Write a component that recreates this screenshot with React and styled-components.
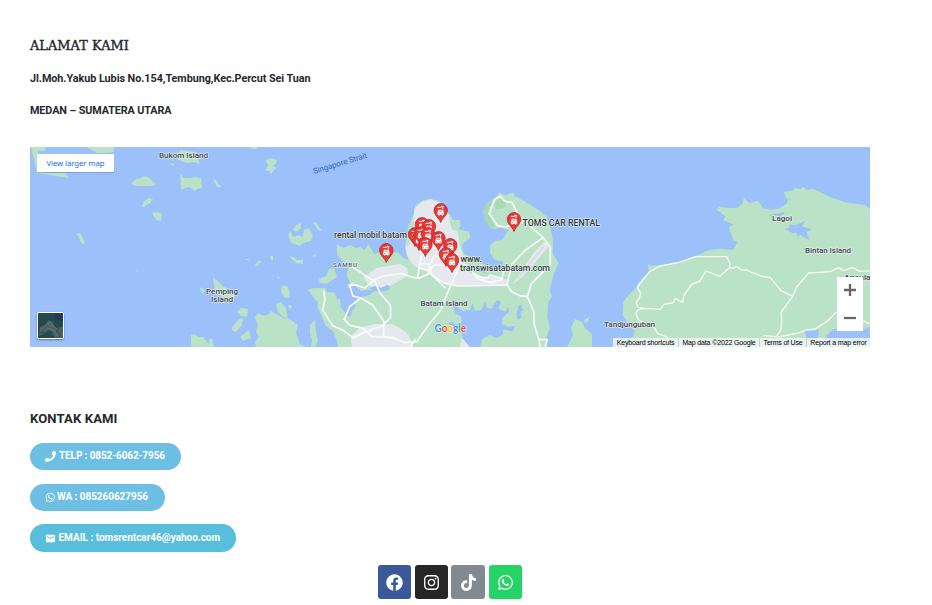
import React from "react";
import styled, { createGlobalStyle } from "styled-components";
import { FaPhone, FaWhatsapp, FaFacebook, FaInstagram, FaTiktok } from "react-icons/fa";
import { MdEmail } from "react-icons/md";

const GlobalStyle = createGlobalStyle`
  * { box-sizing: border-box; }
  body { margin: 0; background: #fff; font-family: Roboto, sans-serif; color: #25282c; overflow: hidden; }
`;

const Page = styled.main`
  width: 932px;
  height: 605px;
  padding: 37px 62px 0 30px;
  display: flex;
  flex-direction: column;
  align-items: flex-start;
`;

const SlabHeading = styled.h2`
  margin: 0;
  font: 500 12.9px/18px "DejaVu Serif", serif;
  letter-spacing: 0.05px;
  -webkit-text-stroke: 0.4px #25282c;
  white-space: nowrap;
`;

const AddressLine = styled.p`
  margin: 16px 0 0;
  font-size: 10.8px;
  line-height: 16px;
  font-weight: 700;
  letter-spacing: ${(p) => p.$spacing || 0}px;
  white-space: nowrap;
`;

const MapFrame = styled.section`
  position: relative;
  width: 840px;
  height: 200px;
  margin-top: 28px;
  flex: none;
  overflow: hidden;
  background: #9cc0f9;
`;

const MapCanvas = styled.svg`
  display: block;
  width: 840px;
  height: 200px;
`;

const LargerMap = styled.a`
  position: absolute;
  left: 7px;
  top: 7px;
  width: 77px;
  height: 18px;
  border-radius: 1px;
  background: #fff;
  box-shadow: 0 1px 1px rgba(0, 0, 0, 0.18);
  color: #1a6fe0;
  font: 400 7.8px/18px "Noto Sans", sans-serif;
  letter-spacing: -0.1px;
  text-align: center;
  white-space: nowrap;
`;

const Satellite = styled.div`
  position: absolute;
  left: 7px;
  top: 165px;
  width: 27px;
  height: 27px;
  border: 1px solid #fff;
  border-radius: 2px;
  overflow: hidden;
  box-shadow: 0 1px 2px rgba(0, 0, 0, 0.4);
  svg { display: block; }
`;

const ZoomPanel = styled.div`
  position: absolute;
  right: 7px;
  top: 130px;
  width: 26px;
  height: 54px;
  display: grid;
  grid-template-rows: 25px 29px;
  place-items: center;
  background: #fff;
`;

const Attribution = styled.div`
  position: absolute;
  right: 0;
  bottom: 0;
  height: 9px;
  width: 257px;
  display: flex;
  background: rgba(241, 244, 245, 0.85);
  font: 400 7px/10px "Liberation Sans", sans-serif;
  color: #000;
  white-space: nowrap;
`;

const Credit = styled.span`
  width: ${(p) => p.$width}px;
  text-align: center;
  letter-spacing: ${(p) => p.$spacing}px;
  & + & { border-left: 1px solid #ccd3d8; }
`;

const ContactHeading = styled.h2`
  margin: 63px 0 0;
  font-size: 13.1px;
  line-height: 18px;
  font-weight: 700;
  letter-spacing: 0.1px;
`;

const ContactList = styled.div`
  display: flex;
  flex-direction: column;
  align-items: flex-start;
  padding-top: 15px;
`;

const ContactButton = styled.a`
  display: flex;
  align-items: center;
  width: ${(p) => p.$width}px;
  height: ${(p) => p.$height || 27}px;
  margin-bottom: ${(p) => p.$gap}px;
  padding: 0 0 2px 15px;
  gap: ${(p) => p.$iconGap}px;
  border-radius: 14px;
  background: ${(p) => p.$color};
  color: #fff;
  font-size: 10px;
  font-weight: 700;
  letter-spacing: ${(p) => p.$spacing}px;
  white-space: nowrap;
  svg { flex: none; position: relative; top: 1px; }
`;

const SocialRow = styled.nav`
  display: grid;
  grid-template-columns: 33px 33px 34px 33px;
  column-gap: 3.6px;
  margin: 13px 0 0 348px;
`;

const SocialLink = styled.a`
  height: 34px;
  display: grid;
  place-items: center;
  border-radius: 3px;
  color: #fff;
  background: ${(p) => p.$color};
`;

const isletShapes = [
  "M31 147H45V151H38V169L45 173L65 173L69 178L55 176L37 173Z",
  "M87 147H114V152L106 153H97L92 150Z",
  "M174 155L182 150L196 152L200 164L194 162L186 163L177 159Z M170 163l4 1-1 2Z",
  "M131 184L136 179L141 178L144 176L148 177L156 184L153 186H136Z",
  "M180 175L182 174L183 178L190 178L194 177L201 178L202 188L197 189L194 191L190 187L185 188L181 190Z",
  "M213 179L216 180L221 187H217Z",
  "M142 207L143 202L149 198L153 199L150 203L144 207Z",
  "M152 213L157 212L162 214L161 221L156 220Z",
  "M76 234L80 233L84 240V245L81 243L79 237Z",
  "M136 270l2 0 1 2-2-1Z M246 259h3v1h-3Z",
  "M213 277L224 287L235 293L234 299L228 301L215 292Z M200 287l3 2 2 2-3 3Z",
  "M191 347V335L194 334L199 337L203 337L207 342L212 347Z M209 347V340L212 338L214 347Z",
  "M250 147h8l-2 2h-4Z",
  "M265 170L268 166L266 160L271 158L277 160L276 164L273 166L276 168L271 174L269 171Z",
  "M288 234L291 231L293 237L299 235L303 237L304 230L309 228L313 236L311 241L303 243L300 246L291 243Z",
  "M293 230L296 225L301 223L301 228L296 232Z M313 223L316 222L322 231L318 230Z",
  "M289 256L294 257L297 260L303 260V264L296 263Z M255 265L259 260L261 262L257 267Z",
  "M270 256h3v4h-2Z M312 256l4-2-1 3Z M277 276l3 2-2 1Z",
  "M281 289L283 285L287 286L290 291L289 297L285 298L282 294Z",
  "M276 304L281 302L286 308L288 319L283 317L278 312Z",
  "M255 317L258 313L264 316L269 314L271 311L276 314L280 316L284 318L291 320L298 325L296 333L299 341L298 347H256L255 342L259 337L256 332L258 326Z",
  "M310 325L315 320L316 332L318 341L315 347H311L312 340L310 333Z",
  "M237 312L241 308L248 309L247 317L241 316Z M232 327L239 319L243 318L242 325L236 332L232 330Z M240 337L249 330L251 338L243 341Z",
  "M288 305l3 0 1 3-3 1Z M292 336L297 338L300 344L307 347H292Z",
  "M319 279L326 276L329 269L334 268L335 272L337 277L332 280L327 284L320 283Z",
  "M567 347L573 335L571 328L575 319L582 322L585 328L592 334V347Z M584 320L590 316L588 322L585 323Z",
  "M717 209l2-3 2 2-2 3Z",
];

const batamLand = [
  "M24 315L36 310L75 308L80 320L105 323L112 345L119 340L125 370L142 385L146 397L155 390L150 355L157 333L142 305L150 295L140 270L145 250L132 232L112 210L110 178L130 188L150 180L170 190L180 184L193 196L205 177L223 207L240 200L250 214L263 215L278 205L292 200L310 218L325 225L315 182L326 120L340 90L347 60L370 46L391 41L418 48L440 82L453 91L457 104L480 105L482 124L475 132L508 140L510 160L485 180L491 205L525 222L555 240L572 240L578 253L606 250L610 232L584 224L570 205L571 180L587 167L607 165L625 135L602 128L580 132L557 111L551 80L558 57L585 38L596 23L617 31L630 25L640 23L645 33L690 58L720 79L740 95L753 135L759 168L758 205L776 235L762 265L749 315L756 335L745 350L742 395L750 427L740 455V486H115L110 465L100 440L76 420L68 400L53 368L53 350L45 343Z",
];

const batamWater = [
  "M146 307L165 300L182 318L208 314L224 317L207 331L181 337L166 347L165 367L142 392L120 362L139 345Z",
  "M207 310L225 302L244 308L260 300L270 303L265 315L240 320L220 317Z",
  "M459 345L472 348L475 370L490 378L510 375L518 354L525 378L545 374L555 350L560 368L575 371L590 346L603 350L595 371L617 380L623 365L628 380L606 398L607 418L622 425L646 422L638 440L610 433L608 449L590 460L570 450L548 461L541 486H509L487 459L485 442L458 432L445 415L458 410L467 420L486 410L482 392L467 387L459 365Z",
  "M654 365L663 357L669 374L661 382L665 397L654 405L650 389Z",
  "M508 240L525 245L550 255L560 265L540 260Z",
];

const batamUrban = [
  "M316 185L328 178L324 140L342 128L340 100L344 70L370 48L392 43L422 54L446 88L450 112L457 134L473 138L478 175L488 207L498 245L512 264L550 276L604 276L624 287L624 302L470 305L420 290L386 262L342 244L320 210Z",
  "M190 277L230 249L300 236L322 250L324 272L250 315L225 315L205 299Z",
  "M142 299L157 294L173 302L159 314Z M155 486L153 452L181 427L225 417L279 418L305 432L326 451L340 486Z",
  "M638 298L700 205L733 170L748 182L718 218L667 276Z",
  "M480 486L485 460L505 475L512 486Z",
];

const batamRoads = [
  "M71 318L75 345L67 374L98 422L128 435L158 458L205 437L247 422L272 397L271 360L240 324L225 290L195 271L160 247",
  "M158 458L168 455L190 442L215 438",
  "M133 403L149 365L182 339L218 360L252 410L250 455L284 458",
  "M182 339L159 333L149 302L166 300L195 309L222 285L250 273L305 265L327 274L357 280L385 267L395 250",
  "M133 403L150 421L190 430L215 454L282 459L315 473L350 470L390 414L423 375L434 344L475 248",
  "M345 465L330 486",
  "M353 277L358 242L366 207M357 236L390 237L403 212L428 220M386 238L396 270L435 295L475 303L620 300",
  "M358 249L383 255L402 240L460 245L500 240L532 280L570 292L604 285L612 255L585 254",
  "M523 266L545 278H565L570 270L600 279",
  "M592 122L567 85L584 44L600 33L615 49L636 52L655 90L698 130L730 158L678 194L636 237L621 299L635 320L660 332L682 335L701 379L703 420L717 464H742L735 486M717 464L720 486",
  "M592 122L617 126L644 118L666 112M730 158L751 187V238L695 295L682 334",
  "M386 260L435 308",
];

const bintanLand = "M82 486L98 456L104 440L68 391L70 350L86 330L112 306L116 292L147 261L142 234L151 242L190 240L235 232L280 215L330 194L365 191L399 195L413 171L401 167L386 126L403 119L370 106L376 94L348 73L358 67L387 69L414 68L427 55L432 38L448 54L474 47L490 70L512 74L535 71L560 56L563 46L550 20L575 18L586 8L600 13L609 5L623 15L639 11L659 21L693 37L735 52L772 57L795 60L810 72V486Z";

const bintanRoads = [
  "M166 486L204 458L173 445L160 424L116 406L108 386L113 374L134 370L180 373L192 358L218 354L226 341L249 352L251 333L276 297L298 290L318 258L360 274L388 248L390 235L380 215L287 215L237 232L180 243L148 261L112 306L122 325L118 339L108 353L115 367L134 370",
  "M388 248L400 250L410 244L423 254L439 255L486 274L511 278L543 317L578 334L544 381L545 406L543 434L529 455L490 452",
  "M578 334L590 306L626 264L691 260L715 248L731 257L757 247L780 259L810 257",
  "M530 457L595 444L618 435L646 432L680 410L710 381L750 390L810 417",
];

const bintanWater = [
  "M553 132L569 127L568 119L590 119L614 108L606 124L617 128L633 131L630 137L619 140L627 163L612 159L602 149L592 152L588 143L577 144L565 138Z",
  "M505 91L523 87L552 81L552 86L538 94L523 91Z M564 39l5 3-3 5Z M615 438L657 435L653 460H620Z M680 450L701 433H790L810 425V475H675Z",
];

const pins = [
  [386.3, 262], [440.7, 222], [514, 231], [422, 236], [429, 238], [415, 246], [419, 250],
  [421, 245], [428, 246], [425.4, 256], [438.5, 250], [450.3, 257], [446, 266], [452, 272],
];

const labels = [
  ["Bukom Island", 159, 158, 49],
  ["Pemping", 206, 293.5, 32],
  ["Island", 211, 302, 22],
  ["Batam Island", 420.5, 305.5, 47],
  ["Tandjunguban", 604, 326.5, 51],
  ["Lagoi", 772, 220.7, 20],
  ["Bintan Island", 805, 252.7, 46],
  ["Anculai", 844, 279.5, 29],
];

const places = [
  ["rental mobil batam", 334, 238.3, 73],
  ["TOMS CAR RENTAL", 522.5, 225.7, 77.5],
  ["www.", 460.5, 261.7, 21.5],
  ["transwisatabatam.com", 460, 271, 90],
];

function MapPin({ x, y }) {
  return (
    <g transform={`translate(${x} ${y})`}>
      <path d="M0 .5C-1.3-4-6.7-6.5-6.7-11.7a6.7 6.7 0 0 1 13.4 0C6.7-6.5 1.3-4 0 .5Z" fill="#e63b35" stroke="#bd222b" strokeWidth=".8" />
      <path d="M-3.2-14.6h3.7M.3-15.6h2.6M2-15.5v2.6" stroke="#fff" fill="none" strokeWidth="1" />
      <path d="M-3.2-9.3l.9-3h4.6l.9 3v2h-1v.9H.9v-.9H-.9v.9h-1.3v-.9h-1Z" fill="#fff" />
      <path d="M-1.5-10.8h3M-2.2-8.5h1M1.2-8.5h1" stroke="#e33b35" strokeWidth=".7" />
    </g>
  );
}

function BatamMap() {
  return (
    <MapCanvas viewBox="30 147 840 200" aria-label="Batam map">
      <rect x="30" y="147" width="840" height="200" fill="#9cc0f9" />
      <g fill="#b9e2c6">{isletShapes.map((d) => <path key={d} d={d} />)}</g>
      <g transform="translate(300 185) scale(.333333)">
        <g fill="#b9e2c6">{batamLand.map((d) => <path key={d} d={d} />)}</g>
        <path d="M557 57L585 38L596 28L604 34L584 45L568 84L591 122L575 132L556 110L550 80Z M604 34L620 55L609 70L590 72L580 55Z" fill="#a6d9b5" />
        <g fill="#e5e8ec">{batamUrban.map((d) => <path key={d} d={d} />)}</g>
        <g fill="#9cc0f9">{batamWater.map((d) => <path key={d} d={d} />)}</g>
        <path d="M652 282L732 184" stroke="#d6dde1" strokeWidth="5" />
        <g fill="none" stroke="#f9fbf8" strokeWidth="5" strokeLinejoin="round" strokeLinecap="round">
          {batamRoads.map((d) => <path key={d} d={d} />)}
        </g>
      </g>
      <g transform="translate(600 185) scale(.333333)">
        <path fill="#b9e2c6" d={bintanLand} />
        <g fill="#9cc0f9">{bintanWater.map((d) => <path key={d} d={d} />)}</g>
        <g fill="none" stroke="#f6faf2" strokeWidth="4" strokeLinejoin="round">
          {bintanRoads.map((d) => <path key={d} d={d} />)}
        </g>
      </g>
      <g fontFamily="Roboto, sans-serif" fontSize="8" fontWeight="500" fill="#3e4347" stroke="#e9f2f5" strokeWidth="1.2" strokeLinejoin="round" paintOrder="stroke">
        {labels.map(([text, x, y, width]) => <text key={text} x={x} y={y} textLength={width} lengthAdjust="spacingAndGlyphs">{text}</text>)}
      </g>
      <text x="333" y="266.5" fontFamily="Roboto, sans-serif" fontSize="6.2" fontWeight="500" textLength="24" fill="#536068" stroke="#e9f3f5" strokeWidth="1" paintOrder="stroke">SAMBU</text>
      <text x="314" y="174" transform="rotate(-17 314 174)" fontFamily="Roboto, sans-serif" fontSize="8" textLength="56" fill="#3567bd">Singapore Strait</text>
      {pins.map(([x, y]) => <MapPin key={`${x}-${y}`} x={x} y={y} />)}
      <g fontFamily="Roboto, sans-serif" fontSize="8.7" fontWeight="500" fill="#303438" stroke="#eef5f5" strokeWidth="1" strokeLinejoin="round" paintOrder="stroke">
        {places.map(([text, x, y, width]) => <text key={text} x={x} y={y} textLength={width} lengthAdjust="spacingAndGlyphs">{text}</text>)}
      </g>
      <text x="434.5" y="332" fontFamily="Lato, sans-serif" fontSize="10.8" fontWeight="700" textLength="31.5" lengthAdjust="spacingAndGlyphs" stroke="#fff" strokeWidth="1" paintOrder="stroke">
        <tspan fill="#4285f4">G</tspan><tspan fill="#ea4335">o</tspan><tspan fill="#fbbc04">o</tspan><tspan fill="#4285f4">g</tspan><tspan fill="#34a853">l</tspan><tspan fill="#ea4335">e</tspan>
      </text>
    </MapCanvas>
  );
}

function SatelliteTile() {
  return (
    <svg width="25" height="25" viewBox="0 0 25 25">
      <path fill="#25484f" d="M0 0h25v25H0Z" />
      <path fill="#263956" d="M17 0h8v10l-8-5Z" />
      <path fill="#4a6061" d="M2 14L7 12L11 7L15 9L17 14L20 16L25 13V25H17L14 19L10 17L6 21L1 23Z" />
      <path fill="none" stroke="#718080" strokeWidth=".6" d="M2 17L7 13L12 9L16 14L20 16L23 14M6 20L10 15L17 18L19 23M9 10L15 15" />
      <path fill="none" stroke="#2e5551" strokeWidth="1.2" d="M18 10L21 15L19 18L23 24M2 20L10 19L16 23" />
    </svg>
  );
}

export default function App() {
  return (
    <>
      <GlobalStyle />
      <Page>
        <SlabHeading>ALAMAT KAMI</SlabHeading>
        <AddressLine $spacing={-0.04}>Jl.Moh.Yakub Lubis No.154,Tembung,Kec.Percut Sei Tuan</AddressLine>
        <AddressLine $spacing={-0.1}>MEDAN – SUMATERA UTARA</AddressLine>
        <MapFrame>
          <BatamMap />
          <LargerMap>View larger map</LargerMap>
          <Satellite><SatelliteTile /></Satellite>
          <ZoomPanel>
            <svg width="12" height="12" viewBox="0 0 12 12" aria-label="Zoom in"><path d="M0 6h12M6 0v12" stroke="#666" strokeWidth="2.3" /></svg>
            <svg width="12" height="12" viewBox="0 0 12 12" aria-label="Zoom out"><path d="M0 7h12" stroke="#666" strokeWidth="2.3" /></svg>
          </ZoomPanel>
          <Attribution>
            <Credit $width={65} $spacing={-0.15}>Keyboard shortcuts</Credit>
            <Credit $width={81} $spacing={-0.15}>Map data ©2022 Google</Credit>
            <Credit $width={47} $spacing={-0.2}>Terms of Use</Credit>
            <Credit $width={64} $spacing={-0.15}>Report a map error</Credit>
          </Attribution>
        </MapFrame>
        <ContactHeading>KONTAK KAMI</ContactHeading>
        <ContactList>
          <ContactButton $width={151} $gap={14} $iconGap={3} $spacing={-0.11} $color="#6dbfe4"><FaPhone size={11} />TELP : 0852-6062-7956</ContactButton>
          <ContactButton $width={135} $gap={13} $iconGap={1.5} $spacing={-0.05} $color="#6dbfe4"><FaWhatsapp size={10.5} />WA : 085260627956</ContactButton>
          <ContactButton $width={206} $height={28} $gap={0} $iconGap={2.5} $spacing={-0.02} $color="#58bedb"><MdEmail size={11} />EMAIL : tomsrentcar46@yahoo.com</ContactButton>
        </ContactList>
        <SocialRow>
          <SocialLink $color="#3b5998" aria-label="Facebook"><FaFacebook size={17} /></SocialLink>
          <SocialLink $color="#262626" aria-label="Instagram"><FaInstagram size={17} /></SocialLink>
          <SocialLink $color="#818a91" aria-label="TikTok"><FaTiktok size={17} /></SocialLink>
          <SocialLink $color="#25d366" aria-label="WhatsApp"><FaWhatsapp size={17} /></SocialLink>
        </SocialRow>
      </Page>
    </>
  );
}
